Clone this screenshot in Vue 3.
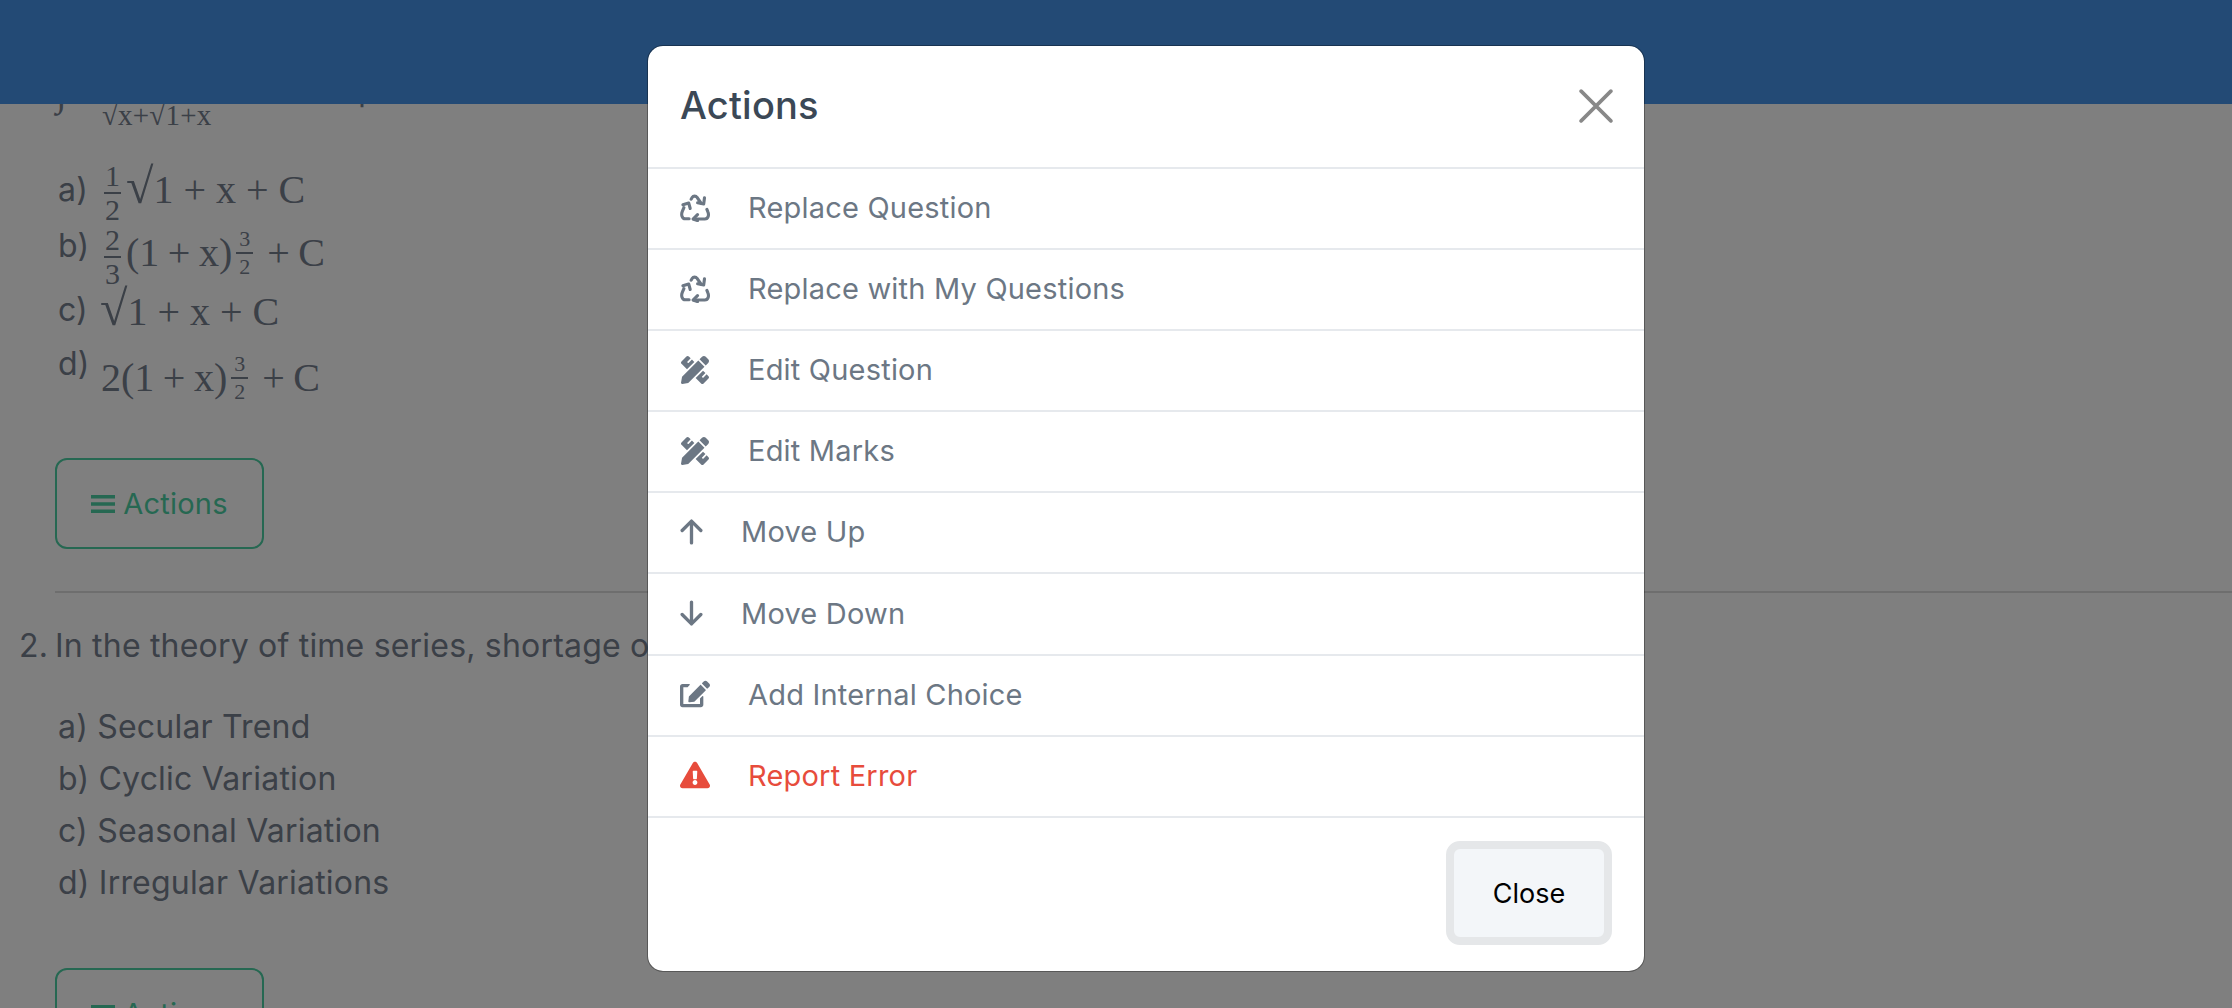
<script setup>
const actions = [
  { label: 'Replace Question', icon: 'recycle' },
  { label: 'Replace with My Questions', icon: 'recycle' },
  { label: 'Edit Question', icon: 'ruler' },
  { label: 'Edit Marks', icon: 'ruler' },
  { label: 'Move Up', icon: 'up' },
  { label: 'Move Down', icon: 'down' },
  { label: 'Add Internal Choice', icon: 'edit' },
  { label: 'Report Error', icon: 'warn', danger: true },
]

const choices = ['a) Secular Trend', 'b) Cyclic Variation', 'c) Seasonal Variation', 'd) Irregular Variations']
</script>

<template>
  <div class="page">
    <header class="topbar" />

    <main class="content">
      <div class="q-one">
        <span class="integral">∫</span>
        <span class="frac small"><span>1</span><span>√x+√1+x</span></span>
        <span class="q-tail">dx is equal to</span>
      </div>

      <div class="math-list">
        <div class="math-row row-a">
          <span class="opt">a)</span>
          <span class="math low"><span class="frac near"><span>1</span><span>2</span></span><span class="root">√</span>1 + x + C</span>
        </div>
        <div class="math-row row-b">
          <span class="opt raised">b)</span>
          <span class="math low tight"><span class="frac near"><span>2</span><span>3</span></span>(1 + x)<span class="frac sup"><span>3</span><span>2</span></span><span class="gap" />+ C</span>
        </div>
        <div class="math-row row-c">
          <span class="opt">c)</span>
          <span class="math shift-c"><span class="root">√</span>1 + x + C</span>
        </div>
        <div class="math-row row-d">
          <span class="opt raised more">d)</span>
          <span class="math low tight shift-d">2(1 + x)<span class="frac sup"><span>3</span><span>2</span></span><span class="gap" />+ C</span>
        </div>
      </div>

      <button class="outline-btn first">
        <svg class="bars" viewBox="0 0 20 18"><path d="M0 1.5h20v3H0zM0 7.5h20v3H0zM0 13.5h20v3H0z" /></svg>
        Actions
      </button>

      <hr class="rule" />

      <p class="q-two"><span class="q-num">2.</span>In the theory of time series, shortage of</p>

      <ul class="choices">
        <li v-for="c in choices" :key="c">{{ c }}</li>
      </ul>

      <button class="outline-btn">
        <svg class="bars" viewBox="0 0 20 18"><path d="M0 1.5h20v3H0zM0 7.5h20v3H0zM0 13.5h20v3H0z" /></svg>
        Actions
      </button>
    </main>

    <div class="backdrop">
      <section class="modal">
        <div class="modal-head">
          <h2>Actions</h2>
          <svg class="close-x" viewBox="0 0 32 32"><path d="M2 2l28 28M30 2L2 30" /></svg>
        </div>

        <div
          v-for="a in actions"
          :key="a.label"
          class="action"
          :class="{ danger: a.danger }"
        >
          <svg v-if="a.icon === 'recycle'" class="ico" viewBox="0 0 29 28">
            <g fill="none" stroke="currentColor" stroke-width="3.1" stroke-linecap="round" stroke-linejoin="round">
              <path d="M10.6 5.2l1.2-2c.9-1.5 3.7-1.5 4.6 0L20.4 9" />
              <path d="M24 3.8l-.8 6.2-6.1-1.2" />
              <path d="M3.4 13.6l-1.6 3.8c-1.3 3-.5 7.4 3 7.4h3.8" />
              <path d="M2.4 10.8l5.8-1.8 1.5 5.5" />
              <path d="M26.4 15.4l.9 2.2c1.4 3.2.6 7.4-3 7.4H13" />
              <path d="M17 20.6l-4.4 4.4 4.4 1.6" />
            </g>
          </svg>
          <svg v-else-if="a.icon === 'ruler'" class="ico" viewBox="0 0 512 512">
            <path d="M109.46 244.04l134.58-134.56-44.12-44.12-61.68 61.68a7.919 7.919 0 0 1-11.21 0l-11.21-11.21c-3.1-3.1-3.1-8.12 0-11.21l61.68-61.68-33.64-33.65C131.47-3.1 111.39-3.1 99 9.29L9.29 99c-12.38 12.39-12.39 32.47 0 44.86l100.17 100.18zm388.47-116.8c18.76-18.76 18.75-49.17 0-67.93l-45.25-45.25c-18.76-18.76-49.18-18.76-67.95 0l-46.02 46.01 113.2 113.2 46.02-46.03zM316.08 82.71l-297 296.96L.32 487.11c-2.53 14.49 10.09 27.11 24.59 24.56l107.45-18.84L429.28 195.9 316.08 82.71zm186.63 285.43l-33.64-33.64-61.68 61.68c-3.1 3.1-8.12 3.1-11.21 0l-11.21-11.21c-3.09-3.1-3.09-8.12 0-11.21l61.68-61.68-44.14-44.14L267.93 402.5l100.21 100.2c12.39 12.39 32.47 12.39 44.86 0l89.71-89.7c12.39-12.39 12.39-32.47 0-44.86z" />
          </svg>
          <svg v-else-if="a.icon === 'up'" class="ico small" viewBox="0 0 22 26">
            <path class="stroked" d="M11 24V3M2 12l9-9 9 9" />
          </svg>
          <svg v-else-if="a.icon === 'down'" class="ico small" viewBox="0 0 22 26">
            <path class="stroked" d="M11 2v21M2 14l9 9 9-9" />
          </svg>
          <svg v-else-if="a.icon === 'edit'" class="ico" viewBox="0 0 576 512">
            <path d="M402.6 83.2l90.2 90.2c3.8 3.8 3.8 10 0 13.8L274.4 405.6l-92.8 10.3c-12.4 1.4-22.9-9.1-21.5-21.5l10.3-92.8L388.8 83.2c3.8-3.8 10-3.8 13.8 0zm162-22.9l-48.8-48.8c-15.2-15.2-39.9-15.2-55.2 0l-35.4 35.4c-3.8 3.8-3.8 10 0 13.8l90.2 90.2c3.8 3.8 10 3.8 13.8 0l35.4-35.4c15.2-15.3 15.2-40 0-55.2zM384 346.2V448H64V128h73.1c3.2 0 6.2-1.3 8.5-3.5l40-40c7.6-7.6 2.2-20.5-8.5-20.5H48C21.5 64 0 85.5 0 112v352c0 26.5 21.5 48 48 48h352c26.5 0 48-21.5 48-48V306.2c0-10.7-12.9-16-20.5-8.5l-40 40c-2.2 2.3-3.5 5.3-3.5 8.5z" />
          </svg>
          <svg v-else class="ico" viewBox="0 0 576 512">
            <path d="M569.517 440.013C587.975 472.007 564.806 512 527.94 512H48.054c-36.937 0-59.999-40.055-41.577-71.987L246.423 23.985c18.467-32.009 64.72-31.951 83.154 0l239.94 416.028zM288 354c-25.405 0-46 20.595-46 46s20.595 46 46 46 46-20.595 46-46-20.595-46-46-46zm-43.673-165.346l7.418 136c.347 6.364 5.609 11.346 11.982 11.346h48.546c6.373 0 11.635-4.982 11.982-11.346l7.418-136c.375-6.874-5.098-12.654-11.982-12.654h-63.383c-6.884 0-12.356 5.78-11.981 12.654z" />
          </svg>
          <span class="action-label">{{ a.label }}</span>
        </div>

        <div class="modal-foot">
          <button class="close-btn">Close</button>
        </div>
      </section>
    </div>
  </div>
</template>

<style>
html, body { margin: 0; background: #fff; }
</style>

<style scoped>
.page {
  position: relative;
  width: 2232px;
  height: 1008px;
  overflow: hidden;
  background: #fff;
  font-family: Inter, "Open Sans", sans-serif;
  color: #76808f;
  font-size: 32px;
  letter-spacing: 0.2px;
}

.topbar {
  position: absolute;
  top: 0;
  left: 0;
  right: 0;
  height: 104px;
  background: #4794ea;
  z-index: 1;
}

.content {
  display: flex;
  flex-direction: column;
  align-items: flex-start;
  padding: 62px 0 0 16px;
}

.q-one {
  display: flex;
  align-items: flex-start;
  height: 97px;
  padding-left: 40px;
  font-family: "Liberation Serif", serif;
}
.integral { font-size: 40px; line-height: 48px; margin-top: 6px; width: 46px; }
.q-tail {
  margin: 8px 0 0 35px;
  font-family: Inter, sans-serif;
  line-height: 40px;
}
.frac {
  display: inline-flex;
  flex-direction: column;
  align-items: center;
  font-size: 30px;
  line-height: 1;
  vertical-align: middle;
}
.frac span:first-child { border-bottom: 2px solid currentColor; padding: 0 1px 1px; }
.frac span:last-child { padding-top: 1px; }
.frac.near { margin-right: 5px; }
.frac.small { font-size: 29px; margin-top: 6px; }
.frac.small span:first-child { visibility: hidden; }
.frac.sup {
  font-size: 22px;
  vertical-align: 20px;
  margin-left: 4px;
}
.frac.sup span:first-child { padding: 0 3px 2px; }
.frac.sup span:last-child { padding-top: 2px; }

.math-list {
  display: flex;
  flex-direction: column;
  padding-left: 42px;
}
.math-row {
  display: flex;
  align-items: center;
}
.row-a { height: 60px; }
.row-b { height: 68px; }
.row-c { height: 44px; }
.row-d { height: 86px; }
.opt { width: 46px; flex-shrink: 0; }
.opt.raised { margin-bottom: 16px; }
.opt.more { margin-bottom: 22px; }
.math {
  font-family: "Liberation Serif", serif;
  font-size: 40px;
  line-height: 1;
  white-space: nowrap;
  letter-spacing: 0;
}
.math.low { margin-top: 8px; }
.math.tight { word-spacing: -1.5px; }
.root { font-size: 50px; }
.gap { display: inline-block; width: 14px; }
.shift-c { margin: 0 0 2px -4px; }
.shift-d { margin-left: -3px; }

.outline-btn {
  display: flex;
  align-items: center;
  justify-content: center;
  gap: 8px;
  width: 209px;
  height: 91px;
  margin: 41px 0 0 39px;
  padding: 0;
  border: 2px solid #4dd0a4;
  border-radius: 12px;
  background: #fff;
  color: #4dd0a4;
  font: inherit;
  font-size: 29px;
  letter-spacing: 0.2px;
  flex-shrink: 0;
}
.outline-btn .bars { width: 24px; height: 22px; fill: currentColor; }

.rule {
  align-self: stretch;
  margin: 42px 0 0 39px;
  border: 0;
  border-top: 2px solid #dcdcdc;
}

.q-two {
  display: flex;
  margin: 33px 0 0 3px;
  line-height: 40px;
  white-space: nowrap;
}
.q-num { width: 36px; }

.choices {
  list-style: none;
  margin: 35px 0 0;
  padding: 0 0 0 42px;
}
.choices li { height: 52px; line-height: 52px; }

.choices + .outline-btn { margin-top: 59px; }

.backdrop {
  position: absolute;
  inset: 0;
  z-index: 2;
  background: rgba(0, 0, 0, 0.5);
}

.modal {
  position: absolute;
  left: 647px;
  top: 45px;
  width: 998px;
  height: 927px;
  box-sizing: border-box;
  display: flex;
  flex-direction: column;
  background: #fff;
  background-clip: padding-box;
  border: 1px solid rgba(0, 0, 0, 0.3);
  border-radius: 16px;
  font-size: 29px;
}

.modal-head {
  display: flex;
  align-items: center;
  justify-content: space-between;
  height: 121px;
  padding: 0 31px 4px 32px;
  box-sizing: border-box;
  flex-shrink: 0;
}
.modal-head h2 {
  margin: 0;
  font-size: 38px;
  font-weight: 500;
  color: #3b4856;
}
.close-x {
  width: 34px;
  height: 34px;
  margin-top: 2px;
  fill: none;
  stroke: #888;
  stroke-width: 3.4;
  stroke-linecap: round;
}

.action {
  display: flex;
  align-items: center;
  gap: 38px;
  height: 81.1px;
  padding: 0 32px 2px;
  box-sizing: border-box;
  border-top: 2px solid #e6e9ed;
  color: #6c7784;
  flex-shrink: 0;
}
.action.danger { color: #e74c3c; }
.ico {
  width: 30px;
  height: 28px;
  flex-shrink: 0;
  fill: currentColor;
}
.ico.small { width: 23px; height: 27px; }
.stroked {
  fill: none;
  stroke: currentColor;
  stroke-width: 3.2;
  stroke-linecap: round;
  stroke-linejoin: round;
}

.modal-foot {
  display: flex;
  justify-content: flex-end;
  align-items: center;
  flex: 1;
  padding: 0 32px 2px 0;
  border-top: 2px solid #e6e9ed;
}
.close-btn {
  width: 166px;
  height: 104px;
  box-sizing: border-box;
  border: 8px solid #e5e7e9;
  border-radius: 14px;
  background: #f3f6f9;
  color: #000;
  font: inherit;
  font-size: 27px;
  letter-spacing: 0;
}
</style>
